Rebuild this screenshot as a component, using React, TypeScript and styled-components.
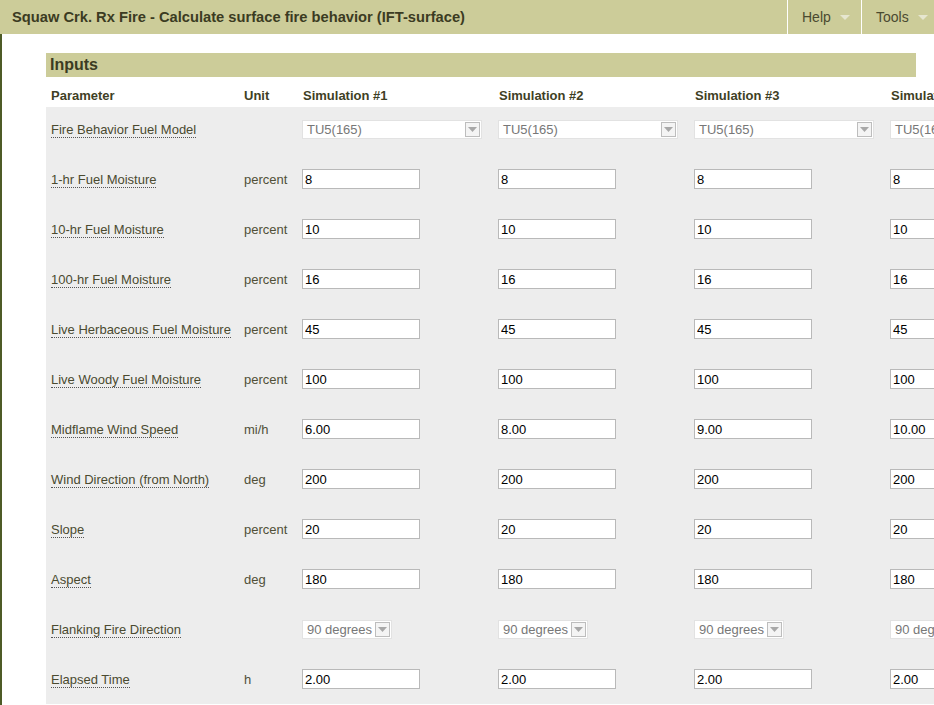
import React from "react";
import styled, { createGlobalStyle } from "styled-components";

const Global = createGlobalStyle`
  html, body { margin: 0; padding: 0; overflow: hidden; background: #fff; }
  body { font-family: "Liberation Sans", Arial, sans-serif; }
`;

const TopBar = styled.header`
  display: flex;
  align-items: stretch;
  height: 34px;
  background: #cccc99;
`;

const Title = styled.h1`
  flex: 1;
  margin: 0;
  padding-left: 12px;
  display: flex;
  align-items: center;
  font-size: 14.7px;
  font-weight: bold;
  color: #3b3b22;
`;

const Menu = styled.div<{ $w: number }>`
  width: ${(p) => p.$w}px;
  flex: none;
  border-left: 1px solid #fff;
  display: flex;
  align-items: center;
  padding-left: 14px;
  box-sizing: border-box;
  font-size: 14px;
  color: #4a4a30;
  gap: 9px;
`;

const Caret = styled.span`
  width: 0;
  height: 0;
  border-left: 5px solid transparent;
  border-right: 5px solid transparent;
  border-top: 5px solid #e6e6cf;
  margin-top: 1px;
`;

const Page = styled.div`
  border-left: 2px solid #4d5b26;
  padding: 19px 0 0 44px;
  min-height: 671px;
  box-sizing: border-box;
`;

const SectionBar = styled.h2`
  width: 870px;
  height: 24px;
  margin: 0;
  background: #cccc99;
  display: flex;
  align-items: center;
  padding-left: 4px;
  box-sizing: border-box;
  font-size: 16px;
  font-weight: bold;
  color: #3b3b22;
`;

const Grid = styled.div`
  margin-top: 7px;
  width: 1036px;
`;

const Row = styled.div<{ $head?: boolean; $first?: boolean }>`
  display: grid;
  grid-template-columns: 193px 59px repeat(4, 196px);
  align-items: center;
  background: ${(p) => (p.$head ? "#fff" : "#ededed")};
  height: ${(p) => (p.$head ? 23 : p.$first ? 47 : 50)}px;
  padding-top: ${(p) => (p.$first ? 12 : p.$head ? 0 : 15)}px;
  padding-bottom: ${(p) => (p.$head ? 0 : 15)}px;
  box-sizing: border-box;
`;

const HeadCell = styled.div`
  padding-left: 5px;
  font-size: 13px;
  font-weight: bold;
  color: #3f3f25;
  white-space: nowrap;
`;

const Label = styled.div`
  padding: 1px 0 0 5px;
  font-size: 13px;
  color: #4a4a30;
  white-space: nowrap;
  display: flex;
  align-items: center;
  height: 20px;
  box-sizing: border-box;
`;

const Abbr = styled.span`
  border-bottom: 1px dotted #555;
  line-height: 15px;
  cursor: help;
`;

const Unit = styled.div`
  padding-left: 5px;
  font-size: 13px;
  color: #505038;
`;

const Cell = styled.div`
  padding-left: 4px;
  display: flex;
  align-items: center;
  height: 20px;
`;

const TextInput = styled.input`
  width: 118px;
  height: 20px;
  box-sizing: border-box;
  border: 1px solid #b9b9b9;
  background: #fff;
  padding: 0 2px;
  margin: 0;
  font-family: "Liberation Sans", Arial, sans-serif;
  font-size: 13px;
  color: #000;
  outline: none;
`;

const Select = styled.div<{ $w?: number }>`
  ${(p) => (p.$w ? `width: ${p.$w}px;` : "")}
  height: 19px;
  box-sizing: border-box;
  border: 1px solid #e2e2e2;
  background: #fff;
  display: flex;
  align-items: center;
  justify-content: space-between;
  padding-left: 4px;
  gap: 3px;
  font-size: 13px;
  color: #777;
  white-space: nowrap;
`;

const SelBtn = styled.span`
  flex: none;
  width: 15px;
  height: 15px;
  box-sizing: border-box;
  border: 1px solid #bdbdbd;
  background: #f4f4f4;
  margin-right: 1px;
  display: flex;
  align-items: center;
  justify-content: center;
`;

const params: { label: string; unit: string; values?: string[]; select?: string; selW?: number }[] = [
  { label: "Fire Behavior Fuel Model", unit: "", select: "TU5(165)", selW: 180 },
  { label: "1-hr Fuel Moisture", unit: "percent", values: ["8", "8", "8", "8"] },
  { label: "10-hr Fuel Moisture", unit: "percent", values: ["10", "10", "10", "10"] },
  { label: "100-hr Fuel Moisture", unit: "percent", values: ["16", "16", "16", "16"] },
  { label: "Live Herbaceous Fuel Moisture", unit: "percent", values: ["45", "45", "45", "45"] },
  { label: "Live Woody Fuel Moisture", unit: "percent", values: ["100", "100", "100", "100"] },
  { label: "Midflame Wind Speed", unit: "mi/h", values: ["6.00", "8.00", "9.00", "10.00"] },
  { label: "Wind Direction (from North)", unit: "deg", values: ["200", "200", "200", "200"] },
  { label: "Slope", unit: "percent", values: ["20", "20", "20", "20"] },
  { label: "Aspect", unit: "deg", values: ["180", "180", "180", "180"] },
  { label: "Flanking Fire Direction", unit: "", select: "90 degrees" },
  { label: "Elapsed Time", unit: "h", values: ["2.00", "2.00", "2.00", "2.00"] },
];

const Arrow = () => (
  <svg width="9" height="5" viewBox="0 0 9 5">
    <path d="M0 0 H9 L4.5 5 Z" fill="#a8a8a8" />
  </svg>
);

export default function App() {
  return (
    <>
      <Global />
      <TopBar>
        <Title>Squaw Crk. Rx Fire - Calculate surface fire behavior (IFT-surface)</Title>
        <Menu $w={74}>
          Help <Caret />
        </Menu>
        <Menu $w={73}>
          Tools <Caret />
        </Menu>
      </TopBar>
      <Page>
        <SectionBar>Inputs</SectionBar>
        <Grid>
          <Row $head>
            <HeadCell>Parameter</HeadCell>
            <HeadCell>Unit</HeadCell>
            <HeadCell>Simulation #1</HeadCell>
            <HeadCell>Simulation #2</HeadCell>
            <HeadCell>Simulation #3</HeadCell>
            <HeadCell>Simulation #4</HeadCell>
          </Row>
          {params.map((p, i) => (
            <Row key={p.label} $first={i === 0}>
              <Label>
                <Abbr>{p.label}</Abbr>
              </Label>
              <Unit>{p.unit}</Unit>
              {[0, 1, 2, 3].map((j) => (
                <Cell key={j}>
                  {p.select ? (
                    <Select $w={p.selW}>
                      <span>{p.select}</span>
                      <SelBtn>
                        <Arrow />
                      </SelBtn>
                    </Select>
                  ) : (
                    <TextInput defaultValue={p.values![j]} />
                  )}
                </Cell>
              ))}
            </Row>
          ))}
        </Grid>
      </Page>
    </>
  );
}
